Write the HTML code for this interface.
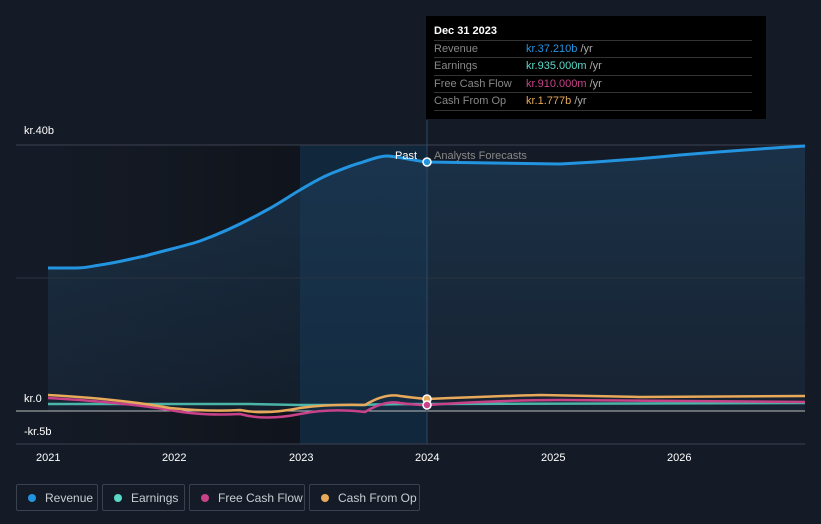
<!DOCTYPE html>
<html><head><style>
body{margin:0;background:#151b26;font-family:"Liberation Sans",sans-serif;}
.w{position:relative;width:821px;height:524px;overflow:hidden;background:#151b26}
.tt{position:absolute;left:426px;top:16px;width:340px;height:103px;background:#000;color:#fff;font-size:11px}
.tt .h{position:absolute;left:8px;top:9px;font-weight:bold;font-size:11px}
.row{position:absolute;left:8px;width:318px;border-top:1px solid #333;height:17px;line-height:17px;color:#888}
.row span{position:absolute;left:92px}
.lg{position:absolute;top:484px;height:27px;border:1px solid #3a4250;border-radius:2px;color:#c8ccd2;font-size:12px;line-height:27px;box-sizing:border-box}
.lg i{position:absolute;left:11px;top:9px;width:8px;height:8px;border-radius:50%}
.lg b{font-weight:normal;position:absolute;left:28px}
.ax{position:absolute;color:#fff;font-size:11px}
</style></head><body><div class="w">
<svg width="821" height="524" style="position:absolute;left:0;top:0">
<defs><linearGradient id="g" x1="0" y1="0" x2="0" y2="1"><stop offset="0" stop-color="#1d3a55" stop-opacity=".7"/><stop offset="1" stop-color="#1d3a55" stop-opacity=".25"/></linearGradient>
<linearGradient id="d" x1="0" y1="0" x2="1" y2="0"><stop offset="0" stop-color="#151b26"/><stop offset="1" stop-color="#10141c"/></linearGradient></defs>
<rect x="48" y="145" width="252" height="299" fill="url(#d)"/>
<rect x="300" y="145" width="127" height="299" fill="#11273b"/>
<path d="M48 268 L75 268 C88 268 92 266 100 265 C120 262 130 259 145 256 C170 249 185 246 200 241 C225 232 245 222 265 211 C280 203 288 197 300 190 C312 183 320 178 330 174 C345 168 352 165 360 163 C372 159 380 156 388 156 C400 157 410 160 427 162 L560 164 Q620 161 680 155 Q740 150 805 146 L805 411 L48 411Z" fill="url(#g)"/>
<line x1="16" y1="145" x2="805" y2="145" stroke="#3a4250"/>
<line x1="16" y1="278" x2="805" y2="278" stroke="#2a3240"/>
<line x1="16" y1="444" x2="805" y2="444" stroke="#3a4250"/>
<line x1="16" y1="411" x2="805" y2="411" stroke="#bbb"/>
<line x1="427" y1="120" x2="427" y2="444" stroke="#2a4a66"/>
<path d="M48 268 L75 268 C88 268 92 266 100 265 C120 262 130 259 145 256 C170 249 185 246 200 241 C225 232 245 222 265 211 C280 203 288 197 300 190 C312 183 320 178 330 174 C345 168 352 165 360 163 C372 159 380 156 388 156 C400 157 410 160 427 162 L560 164 Q620 161 680 155 Q740 150 805 146" fill="none" stroke="#2394e0" stroke-width="3"/>
<path d="M48 404 L100 404 L150 404 L250 404 L300 405 L360 405 Q390 404 427 404 L805 403" fill="none" stroke="#5ad8c8" stroke-width="2.5" opacity=".8"/>
<path d="M48 398 Q120 402 170 410 Q200 416 240 414 Q265 421 300 414 Q330 408 365 412 Q385 400 400 403 Q415 405 427 405 Q500 400 560 400 L805 402" fill="none" stroke="#c8428a" stroke-width="2.5"/>
<path d="M48 395 Q120 399 170 408 Q210 412 240 410 Q265 415 300 408 Q330 404 365 405 Q385 393 400 396 Q415 398 427 399 Q500 396 540 395 L640 397 L805 396" fill="none" stroke="#e8a95a" stroke-width="2.5"/>
<circle cx="427" cy="162" r="4" fill="#2394e0" stroke="#fff" stroke-width="1.5"/>
<circle cx="427" cy="399" r="4" fill="#e8a95a" stroke="#fff" stroke-width="1.5"/>
<circle cx="427" cy="405" r="4" fill="#c8428a" stroke="#fff" stroke-width="1.5"/>
</svg>
<div class="ax" style="left:24px;top:125px">kr.40b</div>
<div class="ax" style="left:24px;top:393px">kr.0</div>
<div class="ax" style="left:24px;top:426px">-kr.5b</div>
<div class="ax" style="left:395px;top:150px">Past</div>
<div class="ax" style="left:434px;top:150px;color:#888">Analysts Forecasts</div>
<div class="ax" style="left:36px;top:452px">2021</div>
<div class="ax" style="left:162px;top:452px">2022</div>
<div class="ax" style="left:289px;top:452px">2023</div>
<div class="ax" style="left:415px;top:452px">2024</div>
<div class="ax" style="left:541px;top:452px">2025</div>
<div class="ax" style="left:667px;top:452px">2026</div>
<div class="tt"><div class="h">Dec 31 2023</div>
<div class="row" style="top:24px">Revenue<span style="color:#2394e0">kr.37.210b <em style="color:#aaa;font-style:normal">/yr</em></span></div>
<div class="row" style="top:41px">Earnings<span style="color:#5ad8c8">kr.935.000m <em style="color:#aaa;font-style:normal">/yr</em></span></div>
<div class="row" style="top:59px">Free Cash Flow<span style="color:#c8428a">kr.910.000m <em style="color:#aaa;font-style:normal">/yr</em></span></div>
<div class="row" style="top:76px;border-bottom:1px solid #333">Cash From Op<span style="color:#e8a95a">kr.1.777b <em style="color:#aaa;font-style:normal">/yr</em></span></div>
</div>
<div class="lg" style="left:16px;width:82px"><i style="background:#2394e0"></i><b>Revenue</b></div>
<div class="lg" style="left:102px;width:83px"><i style="background:#5ad8c8"></i><b>Earnings</b></div>
<div class="lg" style="left:189px;width:116px"><i style="background:#c8428a"></i><b>Free Cash Flow</b></div>
<div class="lg" style="left:309px;width:111px"><i style="background:#e8a95a"></i><b>Cash From Op</b></div>
</div></body></html>
